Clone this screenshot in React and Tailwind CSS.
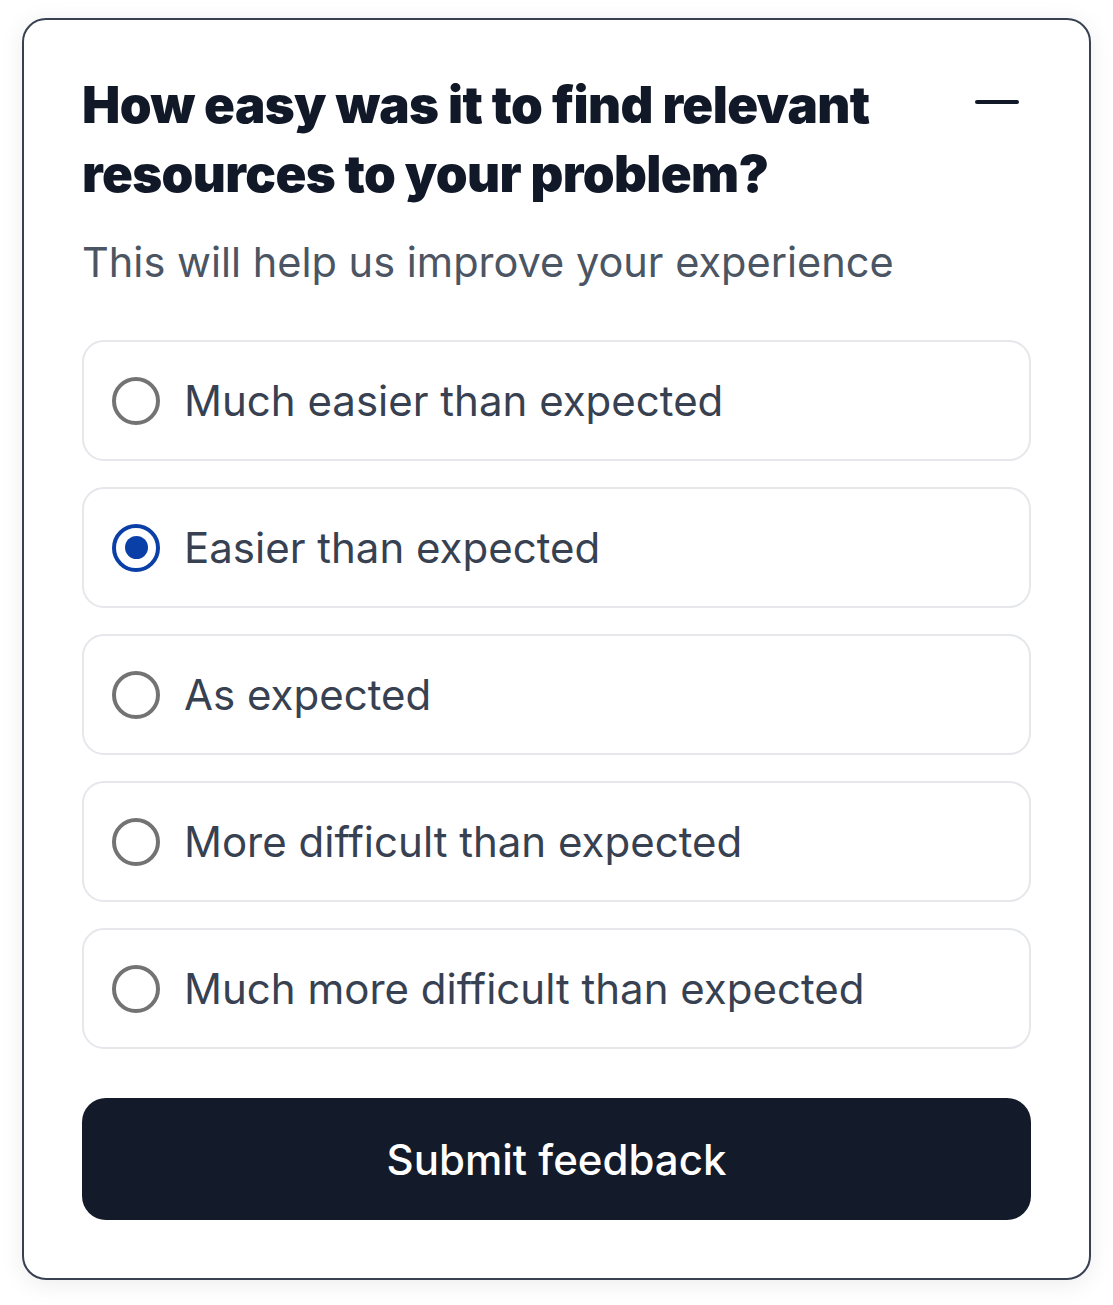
import React, { useState } from 'react';

const options = [
  'Much easier than expected',
  'Easier than expected',
  'As expected',
  'More difficult than expected',
  'Much more difficult than expected',
];

function Radio({ checked }) {
  if (checked) {
    return (
      <span className="flex h-[48px] w-[48px] shrink-0 items-center justify-center rounded-full border-[4px] border-[#0a3fa8]">
        <span className="h-[23px] w-[23px] rounded-full bg-[#0a3fa8]" />
      </span>
    );
  }
  return <span className="h-[48px] w-[48px] shrink-0 rounded-full border-[4px] border-[#737373]" />;
}

export default function App() {
  const [selected, setSelected] = useState(1);

  return (
    <div className="min-h-screen bg-white pt-[18px] pl-[22px] font-['Inter',_'Liberation_Sans',_sans-serif]">
      <div className="w-[1069px] rounded-[24px] border-2 border-[#374151] bg-white px-[58px] pt-[50px] pb-[58px] shadow-[0_4px_24px_rgba(0,0,0,0.08)]">
        {/* Header */}
        <div className="flex items-start justify-between">
          <h2 className="max-w-[850px] text-[51px] font-black leading-[69px] tracking-[-0.012em] text-[#111827]">
            How easy was it to find relevant resources to your problem?
          </h2>
          <button className="mt-[8px] mr-[10px] flex h-[48px] w-[48px] items-center justify-center">
            <svg width="44" height="6" viewBox="0 0 44 6">
              <line x1="2" y1="3" x2="42" y2="3" stroke="#111827" strokeWidth="4" strokeLinecap="round" />
            </svg>
          </button>
        </div>

        <p className="mt-[26px] text-[41.5px] leading-[56px] text-[#4b5563]">
          This will help us improve your experience
        </p>

        {/* Options */}
        <div className="mt-[50px] flex flex-col gap-[26px]">
          {options.map((opt, i) => (
            <label
              key={opt}
              onClick={() => setSelected(i)}
              className="flex h-[121px] cursor-pointer items-center gap-[24px] rounded-[22px] border-2 border-[#e5e7eb] px-[28px]"
            >
              <Radio checked={selected === i} />
              <span className="text-[42px] text-[#374151]">{opt}</span>
            </label>
          ))}
        </div>

        <button className="mt-[49px] flex h-[122px] w-full items-center justify-center rounded-[24px] bg-[#131a29] text-[42px] font-medium text-white">
          Submit feedback
        </button>
      </div>
    </div>
  );
}
